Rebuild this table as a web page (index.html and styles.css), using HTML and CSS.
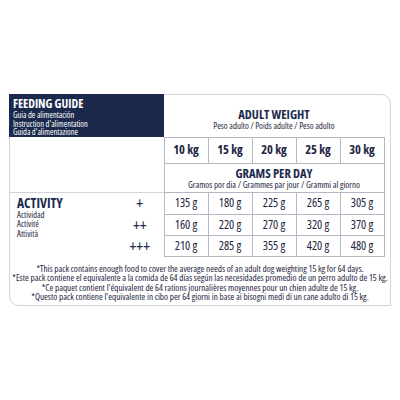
FILE: index.html
```html
<!DOCTYPE html>
<html lang="en">
<head>
<meta charset="utf-8">
<title>Feeding guide</title>
<link rel="stylesheet" href="styles.css">
</head>
<body>
<div class="card">
  <table class="guide">
    <colgroup>
      <col class="c-label"><col class="c-plus">
      <col class="c-w"><col class="c-w"><col class="c-w"><col class="c-w"><col class="c-w">
    </colgroup>
    <tr class="r-head">
      <td class="brand" colspan="2">
        <div class="brand-title">FEEDING GUIDE</div>
        <div class="brand-sub">Guia de alimentación</div>
        <div class="brand-sub">Instruction d'alimentation</div>
        <div class="brand-sub">Guida d'alimentazione</div>
      </td>
      <td class="head" colspan="5">
        <div class="head-title">ADULT WEIGHT</div>
        <div class="head-sub">Peso adulto / Poids adulte / Peso adulto</div>
      </td>
    </tr>
    <tr class="r-weight">
      <td colspan="2"></td>
      <td class="w">10 kg</td>
      <td class="w">15 kg</td>
      <td class="w">20 kg</td>
      <td class="w">25 kg</td>
      <td class="w">30 kg</td>
    </tr>
    <tr class="r-grams">
      <td colspan="2"></td>
      <td class="grams" colspan="5">
        <div class="head-title">GRAMS PER DAY</div>
        <div class="grams-sub">Gramos por dia / Grammes par jour / Grammi al giorno</div>
      </td>
    </tr>
    <tr class="r-data r-first">
      <td class="activity" rowspan="3">
        <div class="act-title">ACTIVITY</div>
        <div class="act-sub">Actividad</div>
        <div class="act-sub">Activité</div>
        <div class="act-sub">Attività</div>
      </td>
      <td class="plus">+</td>
      <td class="d">135 g</td>
      <td class="d">180 g</td>
      <td class="d">225 g</td>
      <td class="d">265 g</td>
      <td class="d">305 g</td>
    </tr>
    <tr class="r-data">
      <td class="plus">++</td>
      <td class="d">160 g</td>
      <td class="d">220 g</td>
      <td class="d">270 g</td>
      <td class="d">320 g</td>
      <td class="d">370 g</td>
    </tr>
    <tr class="r-data">
      <td class="plus">+++</td>
      <td class="d">210 g</td>
      <td class="d">285 g</td>
      <td class="d">355 g</td>
      <td class="d">420 g</td>
      <td class="d">480 g</td>
    </tr>
  </table>
  <div class="notes">
    <p>*This pack contains enough food to cover the average needs of an adult dog weighting 15 kg for 64 days.</p>
    <p>*Este pack contiene el equivalente a la comida de 64 días según las necesidades promedio de un perro adulto de 15 kg.</p>
    <p>*Ce paquet contient l'équivalent de 64 rations journalières moyennes pour un chien adulte de 15 kg.</p>
    <p>*Questo pack contiene l'equivalente in cibo per 64 giorni in base ai bisogni medi di un cane adulto di 15 kg.</p>
  </div>
</div>
</body>
</html>
```
FILE: styles.css
```css
html, body {
  margin: 0;
  padding: 0;
  background: #ffffff;
}

.card {
  box-sizing: border-box;
  width: 382px;
  height: 212px;
  margin: 94px 0 0 9px;
  border: 1px solid #d3d5da;
  border-radius: 0 10px 0 10px;
  font-family: "Open Sans", sans-serif;
  font-stretch: 75%;
  color: #1c2540;
}

.guide {
  border-collapse: collapse;
  table-layout: fixed;
  width: 374px;
  margin: -1px 0 0 -1px;
}

.c-label { width: 107px; }
.c-plus { width: 48px; }
.c-w { width: 44px; }

.guide td {
  padding: 0;
  text-align: center;
  vertical-align: middle;
  line-height: 16px;
}

.r-head { height: 43px; }
.r-weight { height: 26px; }
.r-grams { height: 29px; }
.r-data { height: 21px; }
.r-first { height: 22px; }

.brand {
  background: #1b2a4c;
  color: #ffffff;
  vertical-align: top !important;
  text-align: left !important;
  padding: 2px 4px 0 !important;
}

.brand-title {
  font-weight: 700;
  font-size: 12px;
  line-height: 15px;
}

.brand-sub {
  font-size: 8.4px;
  line-height: 8.7px;
}

.head {
  vertical-align: bottom !important;
  padding-bottom: 5px !important;
}

.head-title {
  font-weight: 700;
  font-size: 12.5px;
  line-height: 13px;
  color: #1b2a4c;
}

.head-sub {
  font-size: 8.8px;
  line-height: 11px;
}

.w {
  border: 1px solid #b4b8c4;
  font-weight: 700;
  font-size: 12.5px;
}

.grams {
  border: 1px solid #b4b8c4;
  border-bottom: none;
  vertical-align: top !important;
  padding-top: 3px !important;
}

.grams-sub {
  font-size: 9px;
  line-height: 10px;
}

.d {
  border: 1px solid #b4b8c4;
  font-size: 12.2px;
}

.r-first td {
  border-top: 1px solid #b4b8c4;
}

.r-first .activity,
.r-first .plus {
  border-top: 1px solid #d3d5da;
}

.activity {
  text-align: left !important;
  vertical-align: top !important;
  padding: 2px 0 0 8px !important;
}

.act-title {
  font-weight: 700;
  font-size: 13.5px;
  line-height: 16px;
  color: #1b2a4c;
}

.act-sub {
  font-size: 8.8px;
  line-height: 9.8px;
}

.plus {
  font-size: 16px;
  color: #1b2a4c;
}

.notes {
  margin-top: 7px;
  text-align: center;
  font-size: 9.2px;
  line-height: 9.5px;
}

.notes p {
  margin: 0;
  white-space: nowrap;
}
```
